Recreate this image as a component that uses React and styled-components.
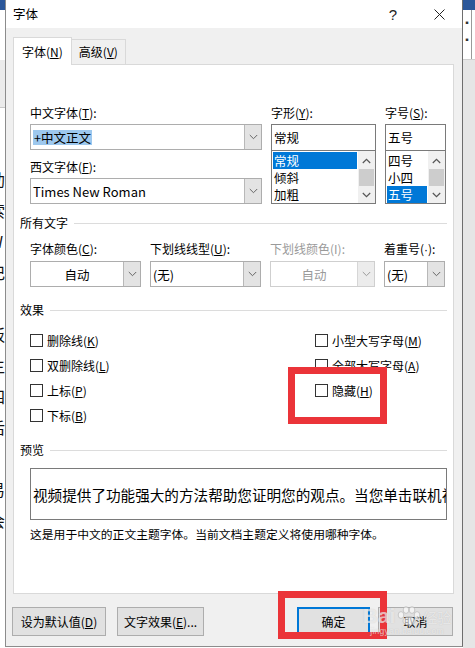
import React from "react";
import styled, { createGlobalStyle } from "styled-components";

const FONT = `"Noto Sans CJK SC", "Noto Sans", sans-serif`;

const GlobalStyle = createGlobalStyle`
  html, body { margin: 0; padding: 0; background: #fff; overflow: hidden; }
  body { font-family: ${FONT}; font-size: 12px; color: #000; }
  * { box-sizing: border-box; }
`;

const Screen = styled.div`
  display: flex;
  width: 475px;
  height: 648px;
  overflow: hidden;
`;

/* ---------- background document (behind dialog) ---------- */
const LeftDoc = styled.div`
  width: 5px;
  flex: none;
  display: flex;
  flex-direction: column;
  overflow: hidden;
`;
const DocBand = styled.div`
  height: ${(p) => p.$h}px;
  flex: none;
  background: ${(p) => p.$bg};
  border-bottom: ${(p) => (p.$line ? "1px solid #c8c8c8" : "none")};
`;
const DocText = styled.div`
  padding-top: 56px;
  display: flex;
  flex-direction: column;
`;
const DocLine = styled.div`
  height: 31px;
  line-height: 31px;
  font-size: 16px;
  margin-left: -11px;
  white-space: nowrap;
  color: #111;
`;
const RightDoc = styled.div`
  width: 12px;
  flex: none;
  display: flex;
  flex-direction: column;
  overflow: hidden;
  background: #e6e6e6;
`;
const RightWhite = styled.div`
  height: 50px;
  flex: none;
  background: #fff;
  border-bottom: 1px solid #cfcfcf;
  display: flex;
`;
const RightCell = styled.div`
  width: ${(p) => p.$w}px;
  flex: none;
  border-right: ${(p) => (p.$line ? "1px solid #9a9a9a" : "none")};
  display: flex;
  flex-direction: column;
  align-items: center;
  padding-top: 8px;
  gap: 8px;
  font-size: 9px;
  color: #333;
  line-height: 9px;
`;

/* ---------- dialog ---------- */
const Dialog = styled.div`
  position: relative;
  width: 458px;
  flex: none;
  height: 647px;
  background: #f0f0f0;
  border-left: 1px solid #8c8c8c;
  border-right: 1px solid #6e6e6e;
  border-bottom: 1px solid #8c8c8c;
  display: flex;
  flex-direction: column;
`;
const TitleBar = styled.div`
  height: 28px;
  flex: none;
  background: #fff;
  display: flex;
  align-items: center;
  padding-left: 7px;
`;
const TitleText = styled.div`
  flex: 1;
  font-size: 12.5px;
  line-height: 16px;
`;
const TitleBtn = styled.div`
  width: 46px;
  height: 28px;
  display: flex;
  align-items: center;
  justify-content: center;
  font-family: "Liberation Sans", sans-serif;
  font-size: 15px;
  color: #222;
`;
const TabsRow = styled.div`
  margin-top: 9px;
  height: 27px;
  flex: none;
  display: flex;
  align-items: flex-end;
  padding-left: 7px;
`;
const Tab = styled.div`
  position: relative;
  z-index: ${(p) => (p.$active ? 1 : 0)};
  height: ${(p) => (p.$active ? 28 : 25)}px;
  margin-bottom: ${(p) => (p.$active ? -1 : 0)}px;
  padding: 0 ${(p) => (p.$active ? 8 : 7)}px;
  background: ${(p) => (p.$active ? "#fff" : "#f0f0f0")};
  border: 1px solid #d9d9d9;
  border-bottom: none;
  border-left: ${(p) => (p.$active ? "1px solid #d9d9d9" : "none")};
  display: flex;
  align-items: center;
  font-size: 12px;
  line-height: 16px;
`;
const Key = styled.span`
  text-decoration: underline;
  text-underline-offset: 1px;
`;
const Dot = styled.span`
  font-family: "Liberation Sans", sans-serif;
`;
const Panel = styled.div`
  margin: 0 8px 0 7px;
  height: 530px;
  flex: none;
  background: #fff;
  border: 1px solid #d9d9d9;
  padding: 39px 6px 0 6px;
  display: flex;
  flex-direction: column;
`;
const Group = styled.div`
  padding-left: 10px;
  display: flex;
  gap: ${(p) => p.$gap ?? 9}px;
  margin-top: ${(p) => p.$mt || 0}px;
`;
const Field = styled.div`
  width: ${(p) => p.$w}px;
  flex: none;
  display: flex;
  flex-direction: column;
`;
const Label = styled.div`
  height: 18px;
  line-height: 18px;
  font-size: 12px;
  white-space: nowrap;
  color: ${(p) => (p.$disabled ? "#9a9a9a" : "#000")};
  margin-top: ${(p) => p.$mt || 0}px;
`;
const Combo = styled.div`
  display: flex;
  height: 26px;
  margin-top: ${(p) => p.$mt ?? 2}px;
  border: 1px solid ${(p) => (p.$disabled ? "#cfcfcf" : "#adadad")};
  background: #fff;
`;
const ComboText = styled.div`
  flex: 1;
  min-width: 0;
  display: flex;
  align-items: center;
  justify-content: ${(p) => (p.$center ? "center" : "flex-start")};
  padding-left: ${(p) => (p.$center ? 0 : 2)}px;
  font-size: ${(p) => p.$fs || 12.5}px;
  white-space: nowrap;
  overflow: hidden;
  color: ${(p) => (p.$disabled ? "#9a9a9a" : "#000")};
`;
const Selected = styled.span`
  background: #9dc8ee;
  line-height: 15px;
  padding: 0 1px;
`;
const ComboBtn = styled.div`
  width: 17px;
  flex: none;
  background: ${(p) => (p.$disabled ? "#ececec" : "#e3e3e3")};
  border-left: 1px solid ${(p) => (p.$disabled ? "#d6d6d6" : "#b8b8b8")};
  display: flex;
  align-items: center;
  justify-content: center;
`;
const EditBox = styled.div`
  height: 27px;
  margin-top: 2px;
  border: 1px solid #7a7a7a;
  display: flex;
  align-items: center;
  padding-left: 2px;
  font-size: 12.5px;
`;
const ListBox = styled.div`
  height: 54px;
  margin-top: -1px;
  border: 1px solid #7a7a7a;
  display: flex;
`;
const ListItems = styled.div`
  flex: 1;
  display: flex;
  flex-direction: column;
  padding: 1px 1px 0 1px;
`;
const ListItem = styled.div`
  height: 17.3px;
  line-height: 17px;
  font-size: 12.5px;
  padding-left: 1px;
  background: ${(p) => (p.$sel ? "#0078d7" : "transparent")};
  color: ${(p) => (p.$sel ? "#fff" : "#000")};
`;
const ScrollBar = styled.div`
  width: 17px;
  flex: none;
  background: #f0f0f0;
  display: flex;
  flex-direction: column;
  padding-top: 1px;
`;
const ScrollArrow = styled.div`
  height: 17px;
  display: flex;
  align-items: center;
  justify-content: center;
`;
const ScrollThumb = styled.div`
  flex: 1;
  margin: 0 1px;
  background: #cdcdcd;
`;
const Heading = styled.div`
  display: flex;
  align-items: center;
  height: 16px;
  line-height: 16px;
  font-size: 12px;
  margin-top: ${(p) => p.$mt}px;
  &::after {
    content: "";
    flex: 1;
    height: 1px;
    background: #dcdcdc;
    margin-left: 6px;
  }
`;
const CheckCol = styled.div`
  width: ${(p) => p.$w || "auto"};
  flex: none;
  display: flex;
  flex-direction: column;
`;
const CheckRow = styled.div`
  height: 25px;
  display: flex;
  align-items: center;
  gap: 4px;
  font-size: 12px;
  white-space: nowrap;
`;
const Box = styled.div`
  width: 13px;
  height: 13px;
  flex: none;
  border: 1px solid #333;
  background: #fff;
`;
const Preview = styled.div`
  margin: 10px 0 0 10px;
  height: 52px;
  border: 1px solid #7a7a7a;
  display: flex;
  align-items: center;
  padding-left: 2px;
  padding-top: 1px;
  overflow: hidden;
  white-space: nowrap;
  font-size: 14.6px;
`;
const Note = styled.div`
  margin: 6px 0 0 10px;
  height: 16px;
  line-height: 16px;
  font-size: 11.8px;
  white-space: nowrap;
`;
const ButtonBar = styled.div`
  flex: 1;
  display: flex;
  align-items: flex-start;
  padding: 13px 9px 0 6px;
  gap: 11px;
`;
const Button = styled.div`
  width: ${(p) => p.$w}px;
  height: 29px;
  flex: none;
  background: #e1e1e1;
  border: ${(p) => (p.$default ? "2px solid #0078d7" : "1px solid #adadad")};
  display: flex;
  align-items: center;
  justify-content: center;
  font-size: 12px;
  margin-left: ${(p) => (p.$push ? "auto" : "0")};
  margin-right: ${(p) => (p.$mr ? p.$mr - 11 : 0)}px;
`;

/* ---------- overlays ---------- */
const RedBox = styled.div`
  position: absolute;
  left: ${(p) => p.$x}px;
  top: ${(p) => p.$y}px;
  width: ${(p) => p.$w}px;
  height: ${(p) => p.$h}px;
  border: 7px solid #eb3439;
  pointer-events: none;
  z-index: 3;
`;
const Watermark = styled.div`
  position: absolute;
  left: 350px;
  top: 592px;
  width: 102px;
  height: 46px;
  z-index: 4;
  display: flex;
  flex-direction: column;
  align-items: center;
  color: rgba(255, 255, 255, 0.6);
  text-shadow: 0 0 1px rgba(120, 120, 120, 0.35);
  font-family: "Liberation Sans", sans-serif;
  pointer-events: none;
`;
const WmTop = styled.div`
  display: flex;
  align-items: flex-end;
  height: 34px;
  gap: 1px;
`;
const WmBig = styled.span`
  font-size: 21px;
  font-weight: bold;
  line-height: 20px;
`;
const WmSmallCn = styled.span`
  font-family: ${FONT};
  font-size: 14px;
  line-height: 18px;
`;
const WmUrl = styled.div`
  font-size: 8.5px;
  line-height: 10px;
  letter-spacing: 0.3px;
`;

const Chevron = ({ color = "#666" }) => (
  <svg width="9" height="6" viewBox="0 0 9 6">
    <path d="M0.8 1 L4.5 4.7 L8.2 1" fill="none" stroke={color} strokeWidth="1" />
  </svg>
);
const Up = () => (
  <svg width="9" height="6" viewBox="0 0 9 6">
    <path d="M0.8 5 L4.5 1.3 L8.2 5" fill="none" stroke="#555" strokeWidth="1.2" />
  </svg>
);
const Down = () => (
  <svg width="9" height="6" viewBox="0 0 9 6">
    <path d="M0.8 1 L4.5 4.7 L8.2 1" fill="none" stroke="#555" strokeWidth="1.2" />
  </svg>
);
const CloseIcon = () => (
  <svg width="11" height="11" viewBox="0 0 11 11">
    <path d="M0.5 0.5 L10.5 10.5 M10.5 0.5 L0.5 10.5" stroke="#222" strokeWidth="1" />
  </svg>
);
const Paw = () => (
  <svg width="26" height="20" viewBox="0 0 26 20">
    <g fill="rgba(255,255,255,0.6)" stroke="rgba(120,120,120,0.4)" strokeWidth="0.8">
      <ellipse cx="5" cy="9" rx="2.8" ry="3.4" />
      <ellipse cx="10" cy="4" rx="2.8" ry="3.4" />
      <ellipse cx="16" cy="4" rx="2.8" ry="3.4" />
      <ellipse cx="21" cy="9" rx="2.8" ry="3.4" />
      <ellipse cx="13" cy="15" rx="6" ry="4.5" />
    </g>
  </svg>
);

const Dropdown = ({ text, center, disabled, mt }) => (
  <Combo $disabled={disabled} $mt={mt}>
    <ComboText $center={center} $disabled={disabled}>{text}</ComboText>
    <ComboBtn $disabled={disabled}>
      <Chevron color={disabled ? "#9a9a9a" : "#666"} />
    </ComboBtn>
  </Combo>
);

const Scroll = () => (
  <ScrollBar>
    <ScrollArrow><Up /></ScrollArrow>
    <ScrollThumb />
    <ScrollArrow><Down /></ScrollArrow>
  </ScrollBar>
);

const Check = ({ label, k }) => (
  <CheckRow>
    <Box />
    <span>
      {label}(<Key>{k}</Key>)
    </span>
  </CheckRow>
);

const docLines = ["助", "索", "W", "记", "", "板", "主", "四", "后", "", "易", "会"];

export default function App() {
  return (
    <>
      <GlobalStyle />
      <Screen>
        <LeftDoc>
          <DocBand $h={10} $bg="#2b579a" />
          <DocBand $h={50} $bg="#ffffff" />
          <DocBand $h={48} $bg="#ebebeb" $line />
          <DocText>
            {docLines.map((t, i) => (
              <DocLine key={i}>{t || "\u00a0"}</DocLine>
            ))}
          </DocText>
        </LeftDoc>

        <Dialog>
          <TitleBar>
            <TitleText>字体</TitleText>
            <TitleBtn>?</TitleBtn>
            <TitleBtn><CloseIcon /></TitleBtn>
          </TitleBar>

          <TabsRow>
            <Tab $active>
              字体(<Key>N</Key>)
            </Tab>
            <Tab>
              高级(<Key>V</Key>)
            </Tab>
          </TabsRow>

          <Panel>
            <Group>
              <Field $w={232}>
                <Label>
                  中文字体(<Key>T</Key>):
                </Label>
                <Combo>
                  <ComboText>
                    <Selected>+中文正文</Selected>
                  </ComboText>
                  <ComboBtn><Chevron /></ComboBtn>
                </Combo>
                <Label $mt={8}>
                  西文字体(<Key>F</Key>):
                </Label>
                <Combo>
                  <ComboText $fs={13}>Times New Roman</ComboText>
                  <ComboBtn><Chevron /></ComboBtn>
                </Combo>
              </Field>
              <Field $w={105}>
                <Label>
                  字形(<Key>Y</Key>):
                </Label>
                <EditBox>常规</EditBox>
                <ListBox>
                  <ListItems>
                    <ListItem $sel>常规</ListItem>
                    <ListItem>倾斜</ListItem>
                    <ListItem>加粗</ListItem>
                  </ListItems>
                  <Scroll />
                </ListBox>
              </Field>
              <Field $w={61}>
                <Label>
                  字号(<Key>S</Key>):
                </Label>
                <EditBox>五号</EditBox>
                <ListBox>
                  <ListItems>
                    <ListItem>四号</ListItem>
                    <ListItem>小四</ListItem>
                    <ListItem $sel>五号</ListItem>
                  </ListItems>
                  <Scroll />
                </ListBox>
              </Field>
            </Group>

            <Heading $mt={11}>所有文字</Heading>
            <Group $mt={9}>
              <Field $w={111}>
                <Label>
                  字体颜色(<Key>C</Key>):
                </Label>
                <Dropdown text="自动" center mt={3} />
              </Field>
              <Field $w={111}>
                <Label>
                  下划线线型(<Key>U</Key>):
                </Label>
                <Dropdown text="(无)" mt={3} />
              </Field>
              <Field $w={105}>
                <Label $disabled>下划线颜色(I):</Label>
                <Dropdown text="自动" center disabled mt={3} />
              </Field>
              <Field $w={61}>
                <Label>
                  着重号(<Dot>·</Dot>):
                </Label>
                <Dropdown text="(无)" mt={3} />
              </Field>
            </Group>

            <Heading $mt={15}>效果</Heading>
            <Group $mt={10} $gap={0}>
              <CheckCol $w="285px">
                <Check label="删除线" k="K" />
                <Check label="双删除线" k="L" />
                <Check label="上标" k="P" />
                <Check label="下标" k="B" />
              </CheckCol>
              <CheckCol>
                <Check label="小型大写字母" k="M" />
                <Check label="全部大写字母" k="A" />
                <Check label="隐藏" k="H" />
              </CheckCol>
            </Group>

            <Heading $mt={14}>预览</Heading>
            <Preview>视频提供了功能强大的方法帮助您证明您的观点。当您单击联机视频时</Preview>
            <Note>这是用于中文的正文主题字体。当前文档主题定义将使用哪种字体。</Note>
          </Panel>

          <ButtonBar>
            <Button $w={94}>
              设为默认值(<Key>D</Key>)
            </Button>
            <Button $w={87}>
              文字效果(<Key>E</Key>)...
            </Button>
            <Button $w={73} $default $push $mr={8}>
              确定
            </Button>
            <Button $w={75}>取消</Button>
          </ButtonBar>

          <RedBox $x={282} $y={367} $w={99} $h={57} />
          <RedBox $x={272} $y={591} $w={109} $h={48} />
          <Watermark>
            <WmTop>
              <WmBig>Bai</WmBig>
              <Paw />
              <WmSmallCn>经验</WmSmallCn>
            </WmTop>
            <WmUrl>jingyan.baidu.com</WmUrl>
          </Watermark>
        </Dialog>

        <RightDoc>
          <DocBand $h={10} $bg="#2b579a" />
          <RightWhite>
            <RightCell $w={9} $line>
              <span>▪</span>
              <span>▪</span>
            </RightCell>
            <RightCell $w={3} />
          </RightWhite>
        </RightDoc>
      </Screen>
    </>
  );
}
